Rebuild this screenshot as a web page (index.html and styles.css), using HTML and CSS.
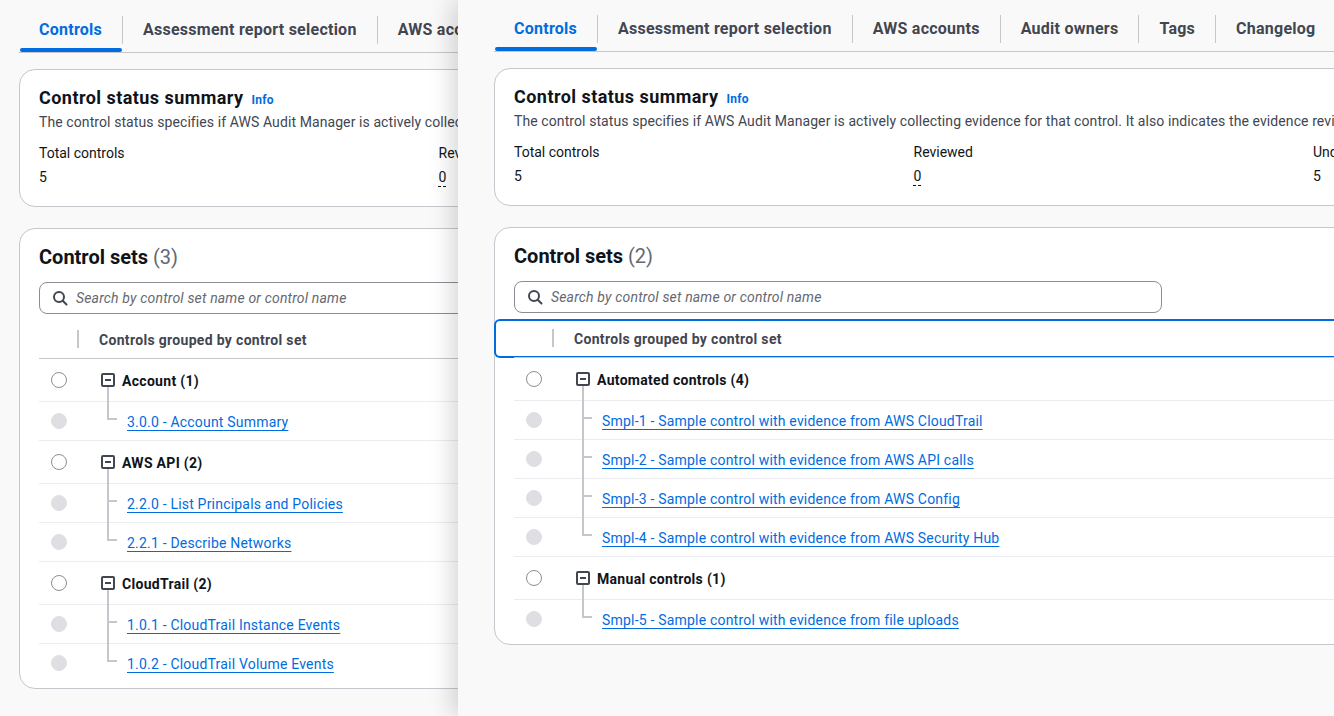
FILE: index.html
```html
<!DOCTYPE html>
<html lang="en">
<head>
<meta charset="utf-8">
<title>Audit Manager controls</title>
<link rel="stylesheet" href="styles.css">
</head>
<body>
<div class="window back">
  <nav class="tabs">
    <span class="tab active">Controls</span><span class="tab-sep"></span>
    <span class="tab">Assessment report selection</span><span class="tab-sep"></span>
    <span class="tab">AWS accounts</span><span class="tab-sep"></span>
    <span class="tab">Audit owners</span><span class="tab-sep"></span>
    <span class="tab">Tags</span><span class="tab-sep"></span>
    <span class="tab">Changelog</span>
  </nav>
  <section class="card summary">
    <h2 class="card-title">Control status summary <span class="info">Info</span></h2>
    <div class="desc">The control status specifies if AWS Audit Manager is actively collecting evidence for that control. It also indicates the evidence review status of the control.</div>
    <div class="kv">
      <div><div class="label">Total controls</div><div class="val">5</div></div>
      <div><div class="label">Reviewed</div><div class="val"><span class="dashed">0</span></div></div>
      <div><div class="label">Under review</div><div class="val">5</div></div>
      <div><div class="label">Inactive</div><div class="val">0</div></div>
    </div>
  </section>
  <section class="card sets">
    <h2 class="sets-title">Control sets <span class="count">(3)</span></h2>
    <div class="search">
      <svg class="search-icon" width="16" height="16" viewBox="0 0 16 16"><circle cx="7" cy="7" r="5" fill="none" stroke="#424650" stroke-width="2"/><line x1="10.7" y1="10.7" x2="14.5" y2="14.5" stroke="#424650" stroke-width="2" stroke-linecap="round"/></svg>
      <span class="placeholder">Search by control set name or control name</span>
    </div>
    <div class="table">
      <div class="thead-wrap"><div class="thead"><span class="th-sep"></span><span class="th">Controls grouped by control set</span></div></div>
      <div class="row group"><span class="radio"></span><span class="toggle"></span><span class="group-name">Account (1)</span></div>
      <div class="row child"><span class="radio disabled"></span><span class="branch last"></span><a class="link" href="#">3.0.0 - Account Summary</a></div>
      <div class="row group"><span class="radio"></span><span class="toggle"></span><span class="group-name">AWS API (2)</span></div>
      <div class="row child"><span class="radio disabled"></span><span class="branch"></span><a class="link" href="#">2.2.0 - List Principals and Policies</a></div>
      <div class="row child"><span class="radio disabled"></span><span class="branch last"></span><a class="link" href="#">2.2.1 - Describe Networks</a></div>
      <div class="row group"><span class="radio"></span><span class="toggle"></span><span class="group-name">CloudTrail (2)</span></div>
      <div class="row child"><span class="radio disabled"></span><span class="branch"></span><a class="link" href="#">1.0.1 - CloudTrail Instance Events</a></div>
      <div class="row child end"><span class="radio disabled"></span><span class="branch last"></span><a class="link" href="#">1.0.2 - CloudTrail Volume Events</a></div>
    </div>
  </section>
</div>

<div class="window front">
  <nav class="tabs">
    <span class="tab active">Controls</span><span class="tab-sep"></span>
    <span class="tab">Assessment report selection</span><span class="tab-sep"></span>
    <span class="tab">AWS accounts</span><span class="tab-sep"></span>
    <span class="tab">Audit owners</span><span class="tab-sep"></span>
    <span class="tab">Tags</span><span class="tab-sep"></span>
    <span class="tab">Changelog</span>
  </nav>
  <section class="card summary">
    <h2 class="card-title">Control status summary <span class="info">Info</span></h2>
    <div class="desc">The control status specifies if AWS Audit Manager is actively collecting evidence for that control. It also indicates the evidence review status of the control.</div>
    <div class="kv">
      <div><div class="label">Total controls</div><div class="val">5</div></div>
      <div><div class="label">Reviewed</div><div class="val"><span class="dashed">0</span></div></div>
      <div><div class="label">Under review</div><div class="val">5</div></div>
      <div><div class="label">Inactive</div><div class="val">0</div></div>
    </div>
  </section>
  <section class="card sets">
    <h2 class="sets-title">Control sets <span class="count">(2)</span></h2>
    <div class="search">
      <svg class="search-icon" width="16" height="16" viewBox="0 0 16 16"><circle cx="7" cy="7" r="5" fill="none" stroke="#424650" stroke-width="2"/><line x1="10.7" y1="10.7" x2="14.5" y2="14.5" stroke="#424650" stroke-width="2" stroke-linecap="round"/></svg>
      <span class="placeholder">Search by control set name or control name</span>
    </div>
    <div class="table">
      <div class="thead-wrap focused"><div class="thead"><span class="th-sep"></span><span class="th">Controls grouped by control set</span></div></div>
      <div class="row group"><span class="radio"></span><span class="toggle"></span><span class="group-name">Automated controls (4)</span></div>
      <div class="row child"><span class="radio disabled"></span><span class="branch"></span><a class="link" href="#">Smpl-1 - Sample control with evidence from AWS CloudTrail</a></div>
      <div class="row child"><span class="radio disabled"></span><span class="branch"></span><a class="link" href="#">Smpl-2 - Sample control with evidence from AWS API calls</a></div>
      <div class="row child"><span class="radio disabled"></span><span class="branch"></span><a class="link" href="#">Smpl-3 - Sample control with evidence from AWS Config</a></div>
      <div class="row child"><span class="radio disabled"></span><span class="branch last"></span><a class="link" href="#">Smpl-4 - Sample control with evidence from AWS Security Hub</a></div>
      <div class="row group"><span class="radio"></span><span class="toggle"></span><span class="group-name">Manual controls (1)</span></div>
      <div class="row child end"><span class="radio disabled"></span><span class="branch last"></span><a class="link" href="#">Smpl-5 - Sample control with evidence from file uploads</a></div>
    </div>
  </section>
</div>
</body>
</html>
```

FILE: styles.css
```css
html, body {
  margin: 0;
  padding: 0;
}

body {
  width: 1334px;
  height: 716px;
  overflow: hidden;
  position: relative;
  background: #f9f9fa;
  font-family: Roboto, "Liberation Sans", sans-serif;
  font-size: 14px;
  line-height: 20px;
  color: #0f141a;
}

.window {
  position: absolute;
  top: 0;
  width: 1320px;
  height: 716px;
  box-sizing: border-box;
  padding-left: 36px;
  background: #f9f9fa;
  overflow: hidden;
}

.window.back {
  left: -17px;
  top: 1px;
}

.window.front {
  left: 458px;
  box-shadow: -6px 0 22px rgba(0, 0, 0, 0.16);
}

/* Tabs */
.tabs {
  display: flex;
  align-items: center;
  padding-top: 6px;
  border-bottom: 1px solid #c6c6cd;
}

.tab {
  position: relative;
  display: flex;
  align-items: center;
  height: 45px;
  padding: 0 20px;
  font-size: 16px;
  font-weight: 700;
  letter-spacing: 0.25px;
  color: #424650;
  white-space: nowrap;
}

.tab.active {
  color: #006ce0;
}

.tab.active::after {
  content: "";
  position: absolute;
  left: 1px;
  right: 0;
  bottom: 0;
  height: 4px;
  border-radius: 2px;
  background: #006ce0;
}

.tab-sep {
  width: 1px;
  height: 28px;
  background: #c6c6cd;
  flex: none;
}

/* Cards */
.card {
  width: 1240px;
  box-sizing: border-box;
  background: #ffffff;
  border: 1px solid #c6c6cd;
  border-radius: 16px;
}

.summary {
  margin-top: 16px;
  padding: 16px 19px 19px;
}

.card-title {
  margin: 0;
  display: flex;
  align-items: baseline;
  font-size: 18px;
  line-height: 24px;
  font-weight: 700;
  letter-spacing: 0.45px;
  color: #0f141a;
}

.info {
  margin-left: 8px;
  font-size: 12px;
  font-weight: 700;
  letter-spacing: 0.2px;
  color: #006ce0;
}

.desc {
  color: #424650;
  white-space: nowrap;
  letter-spacing: 0.09px;
}

.kv {
  display: grid;
  grid-template-columns: repeat(4, 399.5px);
  margin-top: 11px;
}

.val {
  margin-top: 4px;
}

.dashed {
  text-decoration: underline dashed #0f141a 1px;
  text-underline-offset: 4px;
}

.sets {
  margin-top: 21px;
  padding: 16px 0 5px;
}

.sets-title {
  margin: 0 19px;
  font-size: 20px;
  line-height: 24px;
  font-weight: 700;
  color: #0f141a;
}

.count {
  color: #656871;
  font-weight: 400;
}

.search {
  margin: 13px 19px 0;
  width: 648px;
  height: 32px;
  box-sizing: border-box;
  border: 1px solid #8c8c94;
  border-radius: 8px;
  padding-left: 12px;
  display: flex;
  align-items: center;
  gap: 8px;
}

.search-icon {
  flex: none;
}

.placeholder {
  font-style: italic;
  color: #656871;
  letter-spacing: 0.17px;
  white-space: nowrap;
}

/* Table */
.table {
  margin-top: 6px;
}

.thead-wrap.focused {
  box-shadow: inset 0 0 0 2px #006ce0;
  border-radius: 6px 0 0 6px;
  margin-left: -1px;
  padding-left: 1px;
}

.thead {
  margin: 0 19px;
  height: 38px;
  border-bottom: 1px solid #c6c6cd;
  display: flex;
  align-items: center;
}

.th-sep {
  margin-left: 38px;
  width: 2px;
  height: 18px;
  background: #c6c6cd;
}

.th {
  margin-left: 20px;
  padding-top: 1px;
  font-weight: 700;
  letter-spacing: 0.32px;
  color: #424650;
  white-space: nowrap;
}

.row {
  margin: 0 19px;
  padding-left: 12px;
  display: flex;
  align-items: center;
  border-bottom: 1px solid #ebebf0;
}

.row.group {
  height: 42px;
}

.row.child {
  height: 38px;
}

.row.end {
  border-bottom-color: transparent;
}

.radio {
  flex: none;
  width: 16px;
  height: 16px;
  box-sizing: border-box;
  border-radius: 50%;
  border: 1px solid #8c8c94;
  background: #ffffff;
}

.radio.disabled {
  border-color: #dedee3;
  background: #dedee3;
}

.toggle {
  flex: none;
  position: relative;
  margin-left: 34px;
  width: 14px;
  height: 14px;
  box-sizing: border-box;
  border: 2px solid #424650;
  border-radius: 2px;
}

.toggle::before {
  content: "";
  position: absolute;
  left: 2px;
  top: 4px;
  width: 6px;
  height: 2px;
  background: #424650;
}

.toggle::after {
  content: "";
  position: absolute;
  left: 4px;
  top: 12px;
  width: 2px;
  height: 15px;
  background: #c6c6cd;
}

.group-name {
  margin-left: 7px;
  padding-top: 1px;
  font-weight: 700;
  letter-spacing: 0.3px;
  white-space: nowrap;
}

.branch {
  flex: none;
  position: relative;
  align-self: stretch;
  margin-left: 40px;
  width: 20px;
}

.branch::before {
  content: "";
  position: absolute;
  left: 0;
  top: -1px;
  bottom: -1px;
  width: 2px;
  background: #c6c6cd;
}

.branch.last::before {
  bottom: calc(50% + 1px);
}

.branch::after {
  content: "";
  position: absolute;
  left: 0;
  top: calc(50% - 3px);
  width: 10px;
  height: 2px;
  background: #c6c6cd;
}

.link {
  color: #006ce0;
  padding-top: 1px;
  text-decoration: underline;
  text-decoration-thickness: 1px;
  text-underline-offset: 3px;
  letter-spacing: 0.2px;
  white-space: nowrap;
}
```
